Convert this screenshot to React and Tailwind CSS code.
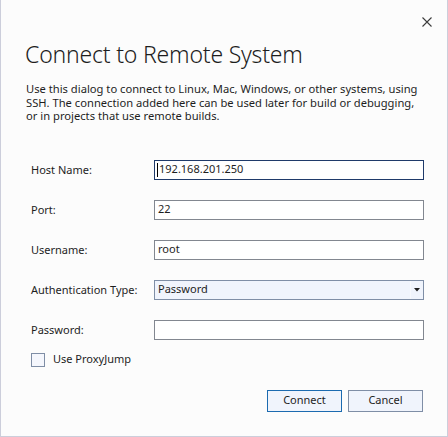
import React from "react";

const font = { fontFamily: '"Segoe UI", "Noto Sans", "Open Sans", sans-serif' };

function Row({ label, children }) {
  return (
    <div className="flex items-center h-[20px]">
      <div className="w-[123px] text-[11px] text-[#1e1e1e] leading-[20px] shrink-0">{label}</div>
      {children}
    </div>
  );
}

export default function App() {
  return (
    <div
      className="w-[448px] h-[437px] bg-[#fcfcfc] border-l border-r border-b border-[#cccedb] flex flex-col text-[#1e1e1e]"
      style={font}
    >
      <div className="flex justify-end pt-[17px] pr-[15px] h-[27px]">
        <svg width="10" height="10" viewBox="0 0 10 10">
          <path d="M0.5 0.5 L9.5 9.5 M9.5 0.5 L0.5 9.5" stroke="#3c3c3c" strokeWidth="1.1" />
        </svg>
      </div>
      <div className="pl-[24px] mt-[11px] text-[23px] font-light leading-[32px] tracking-[-0.2px]">Connect to Remote System</div>
      <div className="pl-[25px] mt-[12px] text-[11.2px] leading-[13.5px] whitespace-nowrap">
        Use this dialog to connect to Linux, Mac, Windows, or other systems, using
        <br />
        SSH. The connection added here can be used later for build or debugging,
        <br />
        or in projects that use remote builds.
      </div>
      <div className="flex flex-col gap-[20px] mt-[37px] pl-[30px]">
        <Row label="Host Name:">
          <div className="w-[270px] h-[20px] bg-white border border-[#1f3a6a] flex items-center pl-[2px] text-[11px]">
            <span className="w-px h-[14px] bg-black mr-[1px]" />
            192.168.201.250
          </div>
        </Row>
        <Row label="Port:">
          <div className="w-[270px] h-[20px] bg-white border border-[#828790] flex items-center pl-[3px] text-[11px]">22</div>
        </Row>
        <Row label="Username:">
          <div className="w-[270px] h-[20px] bg-white border border-[#828790] flex items-center pl-[3px] text-[11px]">root</div>
        </Row>
        <Row label="Authentication Type:">
          <div className="w-[270px] h-[20px] bg-[#f0f4fc] border border-[#7f8ea6] flex items-center text-[11px]">
            <span className="pl-[3px] flex-1">Password</span>
            <div className="w-[13px] h-full border-l border-[#f7f9fd] flex items-center justify-center">
              <svg width="6" height="4" viewBox="0 0 6 4">
                <path d="M0 0 H6 L3 3.5 Z" fill="#1e1e1e" />
              </svg>
            </div>
          </div>
        </Row>
        <Row label="Password:">
          <div className="w-[270px] h-[20px] bg-white border border-[#828790]" />
        </Row>
      </div>
      <div className="flex items-center mt-[13px] pl-[30px] h-[14px]">
        <div className="w-[14px] h-[14px] bg-[#f5f7fd] border border-[#7f8ea6]" />
        <span className="ml-[8px] text-[11px]">Use ProxyJump</span>
      </div>
      <div className="flex justify-end gap-[6px] mt-[23px] pr-[24px]">
        <div className="w-[75px] h-[22px] bg-[#f0f4fc] border border-[#1c6bb0] flex items-center justify-center text-[11px]">Connect</div>
        <div className="w-[75px] h-[22px] bg-[#f0f4fc] border border-[#7f8ea6] flex items-center justify-center text-[11px]">Cancel</div>
      </div>
    </div>
  );
}
